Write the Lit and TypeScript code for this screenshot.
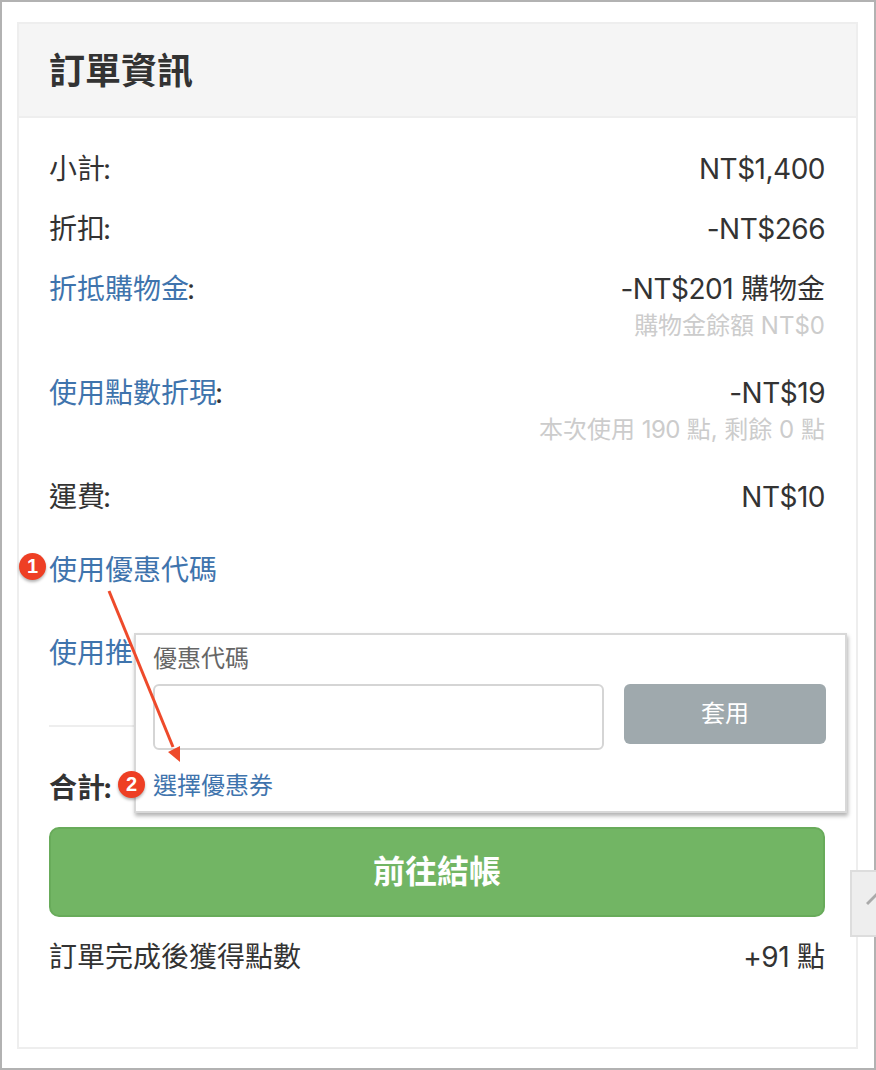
import { LitElement, html, css } from "lit";
import { customElement } from "lit/decorators.js";

@customElement("app-root")
export class AppRoot extends LitElement {
  static styles = css`
    :host { display: block; width: 876px; height: 1070px; overflow: hidden; }
    * { box-sizing: border-box; }
    .frame {
      position: relative; width: 876px; height: 1070px; background: #fff;
      border: 2px solid #b2b2b2; padding: 20px 16px 20px 15px;
      font-family: Inter, "Noto Sans CJK TC", sans-serif; font-size: 28px; line-height: 40px; color: #333;
    }
    .card { height: 1027px; border: 2px solid #eee; }
    .head { height: 94px; background: #f5f5f5; border-bottom: 2px solid #eee; padding: 2px 30px 0; display: flex; align-items: center; }
    .head h2 { margin: 0; font-size: 36px; font-weight: 700; line-height: 40px; }
    .body { padding: 31px 31px 0 30px; }
    .row { display: flex; justify-content: space-between; margin-bottom: 20px; }
    .row.sub { margin-bottom: 30px; }
    .right { text-align: right; }
    .small { font-size: 24px; line-height: 34px; color: #ccc; }
    .n { letter-spacing: -0.5px; }
    .c { margin-left: -2px; }
    a { color: #3f74ad; text-decoration: none; }
    .link { margin-bottom: 43px; }
    .link.first { margin-top: 33px; }
    hr { border: 0; border-top: 2px solid #eee; margin: 52px 0 41px; }
    .total { font-weight: 700; margin-bottom: 19px; }
    .pay {
      height: 90px; border: 2px solid #68ab5a; border-radius: 10px; background: #72b564; color: #fff;
      font-size: 32px; font-weight: 700; display: flex; align-items: center; justify-content: center; margin-bottom: 20px;
    }
    .pop {
      position: absolute; left: 132px; top: 631px; width: 713px; height: 180px; background: #fff;
      border: 2px solid #d8d8d8; box-shadow: 1px 3px 4px rgba(0,0,0,.3); padding: 7px 18px 0 17px;
    }
    .pop label { display: block; font-size: 24px; line-height: 34px; color: #666; margin-bottom: 8px; }
    .pop .line { display: flex; gap: 20px; align-items: flex-start; }
    .input { width: 451px; height: 66px; border: 2px solid #d5d5d5; border-radius: 6px; background: #fff; }
    .apply {
      width: 202px; height: 60px; background: #9fa9ad; border-radius: 6px; color: #fff; font-size: 24px;
      display: flex; align-items: center; justify-content: center;
    }
    .pop a { display: block; font-size: 24px; line-height: 34px; margin-top: 19px; }
    .badge {
      position: absolute; width: 27px; height: 27px; border-radius: 50%; background: #ee3f24; color: #fff;
      font-family: "Liberation Sans", sans-serif; font-size: 20px; font-weight: 700; line-height: 27px; text-align: center;
      box-shadow: 0 2px 3px rgba(0,0,0,.3);
    }
    .b1 { left: 17px; top: 551px; }
    .b2 { left: 116px; top: 769px; }
    .arrow { position: absolute; left: 0; top: 0; width: 872px; height: 1066px; pointer-events: none; }
    .up {
      position: absolute; left: 848px; top: 868px; width: 30px; height: 67px; background: #eee;
      border: 2px solid #ddd; overflow: hidden;
    }
    .up svg { position: absolute; left: 14px; top: 16px; }
  `;

  render() {
    return html`
      <div class="frame">
        <div class="card">
          <div class="head"><h2>訂單資訊</h2></div>
          <div class="body">
            <div class="row"><span>小計<span class="c">:</span></span><span class="n">NT$1,400</span></div>
            <div class="row"><span>折扣<span class="c">:</span></span><span class="n">-NT$266</span></div>
            <div class="row sub">
              <span><a>折抵購物金</a><span class="c">:</span></span>
              <div class="right"><div><span class="n">-NT$201</span> 購物金</div><div class="small">購物金餘額 NT$0</div></div>
            </div>
            <div class="row sub">
              <span><a>使用點數折現</a><span class="c">:</span></span>
              <div class="right"><div class="n">-NT$19</div><div class="small">本次使用 <span class="n">190</span> 點, 剩餘 0 點</div></div>
            </div>
            <div class="row"><span>運費<span class="c">:</span></span><span class="n">NT$10</span></div>
            <div class="link first"><a>使用優惠代碼</a></div>
            <div class="link"><a>使用推薦代碼</a></div>
            <hr />
            <div class="row total"><span>合計<span class="c">:</span></span><span class="n">NT$924</span></div>
            <div class="pay">前往結帳</div>
            <div class="row"><span>訂單完成後獲得點數</span><span><span class="n">+91</span> 點</span></div>
          </div>
        </div>
        <div class="up">
          <svg width="20" height="24" viewBox="0 0 20 24"><path d="M1 16 L10 7 L19 16" fill="none" stroke="#aaa" stroke-width="3"/></svg>
        </div>
        <div class="pop">
          <label>優惠代碼</label>
          <div class="line"><div class="input"></div><div class="apply">套用</div></div>
          <a>選擇優惠券</a>
        </div>
        <svg class="arrow" viewBox="0 0 872 1066">
          <path d="M107 589 L171 745" stroke="#ee4a2b" stroke-width="3" fill="none"/>
          <path d="M166 750 L178 744 L178 760 Z" fill="#ee4a2b"/>
        </svg>
        <div class="badge b1">1</div>
        <div class="badge b2">2</div>
      </div>
    `;
  }
}
